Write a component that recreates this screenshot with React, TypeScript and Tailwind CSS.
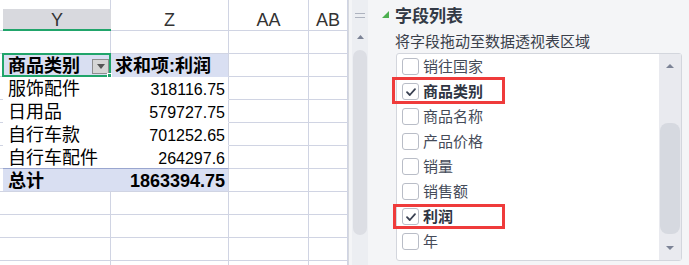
import React from 'react';

const line = 'border-[#d0d4e3]';

type Row = { a?: string; b?: string; kind: 'empty' | 'head' | 'data' | 'last' | 'total' };

const rows: Row[] = [
  { kind: 'empty' },
  { a: '商品类别', b: '求和项:利润', kind: 'head' },
  { a: '服饰配件', b: '318116.75', kind: 'data' },
  { a: '日用品', b: '579727.75', kind: 'data' },
  { a: '自行车款', b: '701252.65', kind: 'data' },
  { a: '自行车配件', b: '264297.6', kind: 'last' },
  { a: '总计', b: '1863394.75', kind: 'total' },
  { kind: 'empty' },
  { kind: 'empty' },
  { kind: 'empty' },
  { kind: 'empty' },
];

const fields = [
  { name: '销往国家', on: false },
  { name: '商品类别', on: true },
  { name: '商品名称', on: false },
  { name: '产品价格', on: false },
  { name: '销量', on: false },
  { name: '销售额', on: false },
  { name: '利润', on: true },
  { name: '年', on: false },
];

const Sheet = () => (
  <div className="relative w-[348px] shrink-0 bg-white font-['Liberation_Sans','Noto_Sans_CJK_SC',sans-serif] text-black">
    {/* column headers */}
    <div className="flex h-[31px]">
      <div className={`w-[3px] border-b ${line}`} />
      <div className="flex w-[108px] flex-col">
        <div className="h-[9px] border-r border-[#d0d4e3]" />
        <div className="flex h-[22px] items-center justify-center border-b-2 border-[#21a56b] bg-[#d8d9de] pt-[2px] text-[18px] text-[#333]">Y</div>
      </div>
      <div className={`flex w-[118px] items-center justify-center border-r border-b ${line} pt-[11px] text-[18px] text-[#333]`}>Z</div>
      <div className={`flex w-[80px] items-center justify-center border-r border-b ${line} pt-[11px] text-[18px] text-[#333]`}>AA</div>
      <div className={`flex w-[39px] items-center justify-center border-r border-b ${line} pt-[11px] text-[18px] text-[#333]`}>AB</div>
    </div>

    {rows.map((r, i) => {
      const pivot = r.kind !== 'empty';
      const shade = r.kind === 'head' || r.kind === 'total';
      const bottom =
        r.kind === 'last' ? 'border-[#9aa6cf]' : r.kind === 'head' || r.kind === 'data' ? 'border-transparent' : line;
      const bold = shade ? 'font-bold' : '';
      return (
        <div key={i} className="flex h-[23px]">
          <div className={`w-[3px] border-b ${line}`} />
          <div
            className={`flex w-[108px] items-center border-b ${bottom} ${pivot ? '' : `border-r ${line}`} ${shade ? 'bg-[#d9dff2]' : ''} pl-[5px] pt-[2px] text-[18px] ${bold}`}
          >
            {r.a}
            {r.kind === 'head' && (
              <div className="mr-[2px] ml-auto flex h-[15px] w-[17px] items-center justify-center border border-[#8e8e8e] bg-[#d6d6d6]">
                <svg width="8" height="5" viewBox="0 0 8 5">
                  <polygon points="0,0 8,0 4,5" fill="#555" />
                </svg>
              </div>
            )}
          </div>
          <div
            className={`flex w-[118px] items-center border-r border-b ${line} ${r.kind === 'last' ? '!border-b-[#9aa6cf]' : ''} ${r.kind === 'head' || r.kind === 'data' ? '!border-b-transparent' : ''} ${shade ? 'bg-[#d9dff2]' : ''} pt-[3px] ${r.kind === 'head' ? 'justify-start pl-[4px] text-[18px]' : 'justify-end pr-[3px]'} ${r.kind === 'total' ? 'text-[18px]' : r.kind === 'data' || r.kind === 'last' ? 'text-[16px]' : ''} ${bold}`}
          >
            {r.b}
          </div>
          <div className={`w-[80px] border-r border-b ${line}`} />
          <div className={`w-[39px] border-r border-b ${line}`} />
        </div>
      );
    })}

    {/* selected cell */}
    <div className="absolute top-[53px] left-[2px] h-[24px] w-[109px] border-2 border-[#21a56b]" />
    <div className="absolute top-[73px] left-[107px] h-[5px] w-[5px] border border-white bg-[#21a56b]" />
  </div>
);

const Check = ({ on }: { on: boolean }) => (
  <div className="flex h-[17px] w-[17px] items-center justify-center rounded-[3px] border border-[#b9bdc7] bg-white">
    {on && (
      <svg width="12" height="12" viewBox="0 0 12 12">
        <path d="M2 6.2 L4.8 9 L10 3.2" fill="none" stroke="#3a4152" strokeWidth="1.8" strokeLinecap="round" strokeLinejoin="round" />
      </svg>
    )}
  </div>
);

const FieldPanel = () => (
  <div className="flex h-[265px] w-[341px] border-l border-[#d6d9df] bg-[#f4f5f7] font-['Noto_Sans_CJK_SC',sans-serif]">
    {/* left scroll strip */}
    <div className="ml-[3px] flex w-[16px] flex-col items-center bg-[#eceef2]">
      <div className="mt-[13px] flex flex-col gap-[3px]">
        <div className="h-px w-[10px] bg-[#aeb3bf]" />
        <div className="h-px w-[10px] bg-[#aeb3bf]" />
      </div>
      <svg className="mt-[17px]" width="7" height="4" viewBox="0 0 7 4">
        <polygon points="0,4 7,4 3.5,0" fill="#7c8396" />
      </svg>
      <div className="mt-[11px] h-[185px] w-[14px] rounded-[7px] bg-[#dcdee4]" />
    </div>

    <div className="flex flex-1 flex-col pt-[3px]">
      <div className="flex h-[22px] items-center">
        <svg className="ml-[14px]" width="7" height="7" viewBox="0 0 7 7">
          <polygon points="7,0 7,7 0,7" fill="#4caf50" />
        </svg>
        <span className="ml-[6px] text-[17px] leading-none font-bold text-[#333a46]">字段列表</span>
      </div>
      <div className="mt-[6px] ml-[27px] h-[20px] text-[15px] leading-[20px] text-[#3a3f4b]">将字段拖动至数据透视表区域</div>

      <div className="relative mt-[2px] ml-[28px] flex h-[208px] w-[286px] rounded-[3px] border border-[#d3d6dd] bg-white">
        <div className="flex flex-1 flex-col">
          {fields.map((f) => (
            <div key={f.name} className="flex h-[25px] items-center pl-[5px]">
              <Check on={f.on} />
              <span className={`ml-[4px] text-[15px] ${f.on ? 'font-bold text-[#2f3542]' : 'text-[#454b59]'}`}>{f.name}</span>
            </div>
          ))}
        </div>
        <div className="flex w-[22px] flex-col items-center bg-[#e9eaef] pt-[9px]">
          <svg width="8" height="6" viewBox="0 0 8 6">
            <polygon points="0,5 8,5 4,1" fill="#7c8396" />
          </svg>
          <div className="mt-[54px] h-[111px] w-[20px] rounded-[8px] bg-[#d6d9e0]" />
          <svg className="mt-[11px]" width="8" height="6" viewBox="0 0 8 6">
            <polygon points="0,1 8,1 4,5" fill="#7c8396" />
          </svg>
        </div>

        {/* highlight boxes */}
        <div className="absolute top-[23px] left-[-5px] h-[27px] w-[113px] border-[3px] border-[#ef3b3b]" />
        <div className="absolute top-[150px] left-[-4px] h-[25px] w-[112px] border-[3px] border-[#ef3b3b]" />
      </div>
    </div>
  </div>
);

export default function App() {
  return (
    <div className="flex h-[265px] w-[689px] overflow-hidden bg-white">
      <Sheet />
      <FieldPanel />
    </div>
  );
}
